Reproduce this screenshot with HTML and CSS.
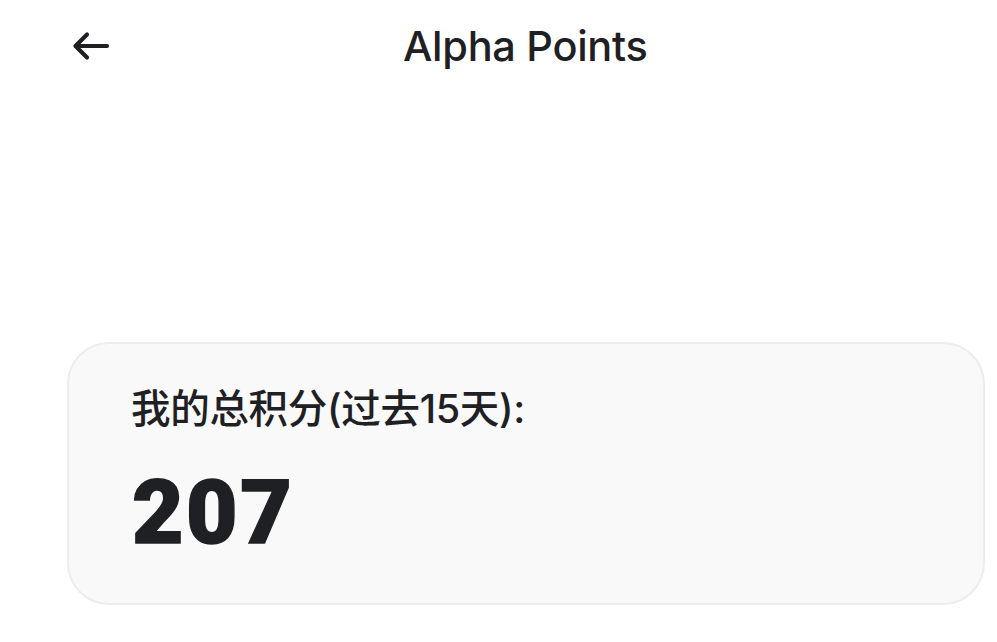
FILE: index.html
```html
<!DOCTYPE html>
<html lang="zh">
<head>
<meta charset="utf-8">
<link rel="stylesheet" href="styles.css">
</head>
<body>
<div class="page">
  <header class="topbar">
    <span class="back" aria-label="back">
      <svg width="38" height="30" viewBox="0 0 38 30" fill="none" stroke="#1f2023" stroke-width="4.2" stroke-linecap="round" stroke-linejoin="round">
        <path d="M35 15H4"/>
        <path d="M15 3.5L3.5 15L15 26.5"/>
      </svg>
    </span>
    <h1 class="title">Alpha Points</h1>
  </header>
  <section class="card">
    <div class="label">我的总积分(过去15天):</div>
    <div class="value">207</div>
  </section>
</div>
</body>
</html>
```
FILE: styles.css
```css
html, body {
  margin: 0;
  padding: 0;
  background: #ffffff;
}
body {
  font-family: Inter, "Noto Sans CJK SC", sans-serif;
  color: #1f2023;
}
.page {
  width: 997px;
  height: 642px;
  overflow: hidden;
}
.topbar {
  display: flex;
  align-items: center;
  height: 92px;
  padding-left: 72px;
}
.back {
  display: flex;
  width: 38px;
  height: 30px;
}
.title {
  margin: 0 0 0 293px;
  font-size: 41.5px;
  font-weight: 500;
  letter-spacing: -0.3px;
}
.card {
  margin: 250px 12px 0 67px;
  height: 263px;
  box-sizing: border-box;
  background: #f9f9f9;
  border: 2px solid #ededed;
  border-radius: 42px;
  padding: 38px 0 0 62px;
}
.label {
  font-size: 39.5px;
  font-weight: 500;
  line-height: 54px;
  letter-spacing: -0.3px;
}
.value {
  margin-top: 34px;
  padding-left: 1px;
  font-family: Roboto, sans-serif;
  font-size: 89px;
  font-weight: 900;
  line-height: 86px;
  letter-spacing: 2.5px;
  -webkit-text-stroke: 1.5px #1f2023;
}
```
